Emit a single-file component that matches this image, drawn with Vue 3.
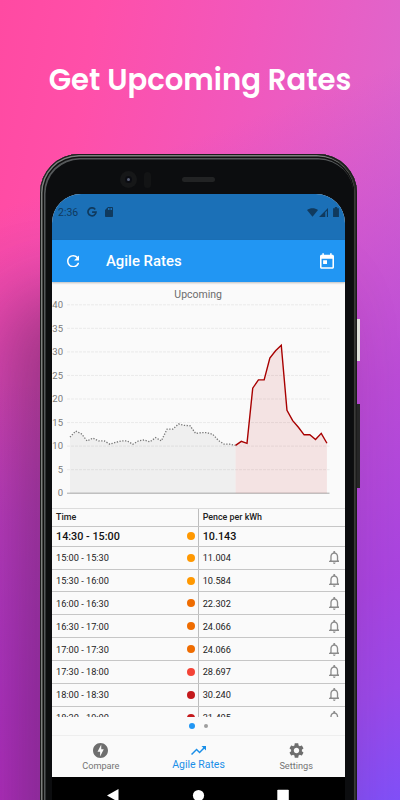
<template>
  <div class="promo">
    <h1 class="promo-title">Get Upcoming Rates</h1>
    <div class="phone">
      <div class="side-button power"></div>
      <div class="side-button volume"></div>
      <div class="bezel">
        <div class="camera"><i></i></div>
        <div class="sensor"></div>
        <div class="speaker"></div>
      </div>

      <div class="screen">
        <div class="status-bar">
          <span class="clock">2:36</span>
          <svg class="g-icon" viewBox="0 0 10 10">
            <path d="M8.2 2.4A4 4 0 1 0 9 5.1H5.1" fill="none" stroke="#103a5e" stroke-width="1.7" />
          </svg>
          <svg class="sd-icon" viewBox="4 2 16 20">
            <path fill="#103a5e" d="M18 2h-8L4.02 8 4 20c0 1.100.9 2 2 2h12c1.100 0 2-.9 2-2V4c0-1.100-.9-2-2-2zm-6 6h-2V4h2v4zm3 0h-2V4h2v4zm3 0h-2V4h2v4z" />
          </svg>
          <span class="spacer"></span>
          <svg class="wifi-icon" viewBox="0 0 24 19">
            <path fill="#103a5e" d="M12 19L0 4C7-1.300 17-1.300 24 4z" />
          </svg>
          <svg class="signal-icon" viewBox="0 0 20 20">
            <path fill="#103a5e" d="M0 20L20 0v20h-2.500V6L14 9.500V20z" />
          </svg>
          <svg class="battery-icon" viewBox="0 0 10 17">
            <path fill="#103a5e" d="M3 0h4v2h3v15H0V2h3z" />
          </svg>
        </div>

        <header class="app-bar">
          <svg class="refresh" viewBox="4 4 16 16">
            <path fill="#fff" d="M17.650 6.350C16.200 4.900 14.210 4 12 4c-4.420 0-7.990 3.580-7.990 8s3.570 8 7.990 8c3.730 0 6.840-2.550 7.730-6h-2.080c-.82 2.330-3.040 4-5.650 4-3.310 0-6-2.690-6-6s2.690-6 6-6c1.660 0 3.140.69 4.220 1.780L13 11h7V4l-2.350 2.350z" />
          </svg>
          <span class="app-title">Agile Rates</span>
          <svg class="today" viewBox="3 1 18 20">
            <path fill="#fff" d="M19 3h-1V1h-2v2H8V1H6v2H5c-1.110 0-1.990.9-1.990 2L3 19c0 1.100.89 2 2 2h14c1.100 0 2-.9 2-2V5c0-1.100-.9-2-2-2zm0 16H5V8h14v11zM7 10h5v5H7z" />
          </svg>
        </header>

        <svg class="chart" viewBox="52 282 293 226">
          <text class="chart-title" x="198.200" y="297.700" text-anchor="middle">Upcoming</text>
          <g v-for="tick in ticks" :key="tick">
            <line
              x1="67" x2="329.500" :y1="yFor(tick)" :y2="yFor(tick)"
              :class="tick === 0 ? 'axis' : 'grid'"
            />
            <text class="tick" x="63" :y="yFor(tick) + 3.200" text-anchor="end">{{ tick }}</text>
          </g>
          <polygon :points="area(past, 0)" fill="#000" fill-opacity="0.042" />
          <polygon :points="area(upcoming, past.length - 1)" fill="#c00000" fill-opacity="0.09" />
          <polyline :points="line(past, 0)" class="past-line" />
          <polyline :points="line(upcoming, past.length - 1)" class="upcoming-line" />
        </svg>

        <div class="table">
          <div class="row head">
            <div class="cell">Time</div>
            <div class="cell">Pence per kWh</div>
          </div>
          <div v-for="(rate, i) in rates" :key="rate.time" class="row" :class="{ now: i === 0 }">
            <div class="cell">
              <span>{{ rate.time }}</span>
              <span class="dot" :class="rate.level"></span>
            </div>
            <div class="cell">
              <span>{{ rate.price }}</span>
              <svg v-if="i > 0" class="bell" viewBox="4 2.500 16 19.500">
                <path fill="#8b8b8b" d="M12 22c1.100 0 2-.9 2-2h-4c0 1.100.9 2 2 2zm6-6v-5c0-3.070-1.630-5.640-4.500-6.320V4c0-.83-.67-1.500-1.500-1.500s-1.500.67-1.500 1.500v.68C7.640 5.360 6 7.920 6 11v5l-2 2v1h16v-1l-2-2zm-2 1H8v-6c0-2.480 1.510-4.500 4-4.500s4 2.020 4 4.500v6z" />
              </svg>
            </div>
          </div>
        </div>

        <div class="pager"><i class="on"></i><i></i></div>

        <nav class="tabs">
          <div class="tab">
            <svg class="bolt" viewBox="2 2 20 20">
              <path fill="#6e6e6e" d="M12 2.020c-5.510 0-9.980 4.470-9.980 9.980s4.470 9.980 9.980 9.980 9.980-4.470 9.980-9.980S17.510 2.020 12 2.020zM11.480 20v-6.260H8L13 4v6.260h3.350L11.480 20z" />
            </svg>
            <span>Compare</span>
          </div>
          <div class="tab active">
            <svg class="trend" viewBox="2 6 20 12">
              <path fill="#1a8fe8" d="M16 6l2.290 2.290-4.880 4.880-4-4L2 16.590 3.410 18l6-6 4 4 6.300-6.290L22 12V6z" />
            </svg>
            <span>Agile Rates</span>
          </div>
          <div class="tab">
            <svg class="gear" viewBox="2 2 20 20">
              <path fill="#6e6e6e" d="M19.140 12.940c.04-.3.060-.61.060-.94 0-.32-.02-.64-.07-.94l2.030-1.580c.18-.14.23-.41.120-.61l-1.920-3.320c-.12-.22-.37-.29-.59-.22l-2.390.96c-.5-.38-1.030-.7-1.620-.94l-.36-2.540c-.04-.24-.24-.41-.48-.41h-3.840c-.24 0-.43.17-.47.41l-.36 2.540c-.59.24-1.130.57-1.620.94l-2.390-.96c-.22-.08-.47 0-.59.22L2.740 8.870c-.12.21-.08.47.120.61l2.030 1.580c-.05.3-.09.63-.09.94s.02.64.070.94l-2.030 1.580c-.18.14-.23.41-.12.61l1.920 3.320c.12.22.37.29.59.22l2.390-.96c.5.38 1.030.7 1.620.94l.36 2.540c.05.24.24.41.48.41h3.840c.24 0 .44-.17.47-.41l.36-2.540c.59-.24 1.130-.56 1.620-.94l2.390.96c.22.08.47 0 .59-.22l1.920-3.320c.12-.22.070-.47-.12-.61l-2.010-1.580zM12 15.600c-1.980 0-3.600-1.620-3.600-3.600s1.620-3.600 3.600-3.600 3.600 1.620 3.600 3.600-1.620 3.600-3.600 3.600z" />
            </svg>
            <span>Settings</span>
          </div>
        </nav>

        <svg class="system-nav" viewBox="52 777 293 23">
          <path d="M118.500 788.500v13L107 795z" fill="#fff" />
          <circle cx="198.500" cy="795" r="5.600" fill="#fff" />
          <rect x="277.300" y="789.200" width="11.500" height="12" rx="0.800" fill="#fff" />
        </svg>
      </div>
    </div>
  </div>
</template>

<script setup>
const ticks = [0, 5, 10, 15, 20, 25, 30, 35, 40]

const past = [
  11.9, 13.2, 12.6, 11.1, 11.7, 11.1, 11.1, 10.4, 10.8, 11.1,
  11.1, 10.4, 11.1, 11.3, 10.9, 11.8, 11.1, 13.6, 13.6, 14.7,
  14.4, 14.35, 12.7, 12.85, 12.85, 12.5, 11.2, 10.4, 10.4, 10.143,
]

const upcoming = [
  10.143, 11.004, 10.584, 22.302, 24.066, 24.066, 28.697, 30.24, 31.405,
  17.6, 15.4, 14, 12.4, 12.4, 11.4, 12.7, 10.6,
]

const rates = [
  { time: '14:30 - 15:00', price: '10.143', level: 'low' },
  { time: '15:00 - 15:30', price: '11.004', level: 'low' },
  { time: '15:30 - 16:00', price: '10.584', level: 'low' },
  { time: '16:00 - 16:30', price: '22.302', level: 'mid' },
  { time: '16:30 - 17:00', price: '24.066', level: 'mid' },
  { time: '17:00 - 17:30', price: '24.066', level: 'mid' },
  { time: '17:30 - 18:00', price: '28.697', level: 'high' },
  { time: '18:00 - 18:30', price: '30.240', level: 'peak' },
  { time: '18:30 - 19:00', price: '31.405', level: 'peak' },
]

const xFor = (i) => 70 + i * 5.71
const yFor = (value) => 493.2 - value * 4.71

const line = (values, offset) =>
  values.map((v, i) => `${xFor(i + offset).toFixed(2)},${yFor(v).toFixed(2)}`).join(' ')

// closes the line down to the zero axis
const area = (values, offset) =>
  `${xFor(offset)},${yFor(0)} ${line(values, offset)} ${xFor(offset + values.length - 1)},${yFor(0)}`
</script>

<style>
body {
  margin: 0;
  overflow: hidden;
}
</style>

<style scoped>
.promo {
  position: relative;
  width: 400px;
  height: 800px;
  overflow: hidden;
  font-family: Roboto, sans-serif;
  background:
    radial-gradient(ellipse 200px 420px at 0 100%, rgba(190, 44, 200, 0.85), rgba(200, 50, 190, 0)),
    linear-gradient(160deg,
      rgba(180, 62, 214, 0) 22%,
      rgba(176, 66, 216, 0.75) 55%,
      rgba(166, 66, 224, 0.95) 76%,
      #9b49e9 88%,
      #8150f8 100%),
    linear-gradient(100deg, #ff4aa2 0%, #ff4fa9 18%, #f158bd 48%, #d16fd7 100%);
}

.promo-title {
  margin: 0;
  height: 154px;
  padding-top: 60px;
  box-sizing: border-box;
  text-align: center;
  color: #fff;
  font-family: Poppins, Inter, sans-serif;
  font-size: 29.100px;
  line-height: 40px;
  font-weight: 600;
  white-space: nowrap;
}

.phone {
  position: relative;
  box-sizing: border-box;
  width: 317px;
  height: 700px;
  margin-left: 40px;
  padding: 0 12px;
  border-radius: 39px;
  background: #0c0d0f;
  box-shadow:
    inset 0 0 0 1px #1c1c1c,
    inset -1.500px 0 0 1px #2e2e2c,
    inset 0 0 0 2.500px #7c7f7d,
    inset 0 0 0 4px #101010,
    inset 1px 1px 0 4.500px #55585a,
    -34px 140px 70px rgba(75, 25, 60, 0.44);
}

.side-button {
  position: absolute;
  left: 317px;
  width: 3px;
}

.power {
  top: 165px;
  height: 42px;
  background: #dfe0da;
}

.volume {
  top: 250px;
  height: 84px;
  background: #262626;
}

.bezel {
  display: flex;
  align-items: center;
  height: 39.500px;
  padding: 12px 0 0 68px;
  box-sizing: border-box;
}

.camera {
  display: flex;
  align-items: center;
  justify-content: center;
  width: 17px;
  height: 17px;
  border-radius: 50%;
  background: #161718;
}

.camera i {
  width: 3px;
  height: 3px;
  border-radius: 50%;
  background: #5b6278;
  border: 2px solid #0b0c12;
}

.sensor {
  width: 7px;
  height: 16px;
  margin-left: 7px;
  border-radius: 4px;
  background: #131415;
}

.speaker {
  width: 33px;
  height: 5px;
  margin-left: 31px;
  border-radius: 3px;
  background: #222324;
}

.screen {
  height: 640px;
  overflow: hidden;
  border-radius: 29px 29px 0 0;
  background: #fafafa;
}

.status-bar {
  display: flex;
  align-items: center;
  height: 46.500px;
  padding: 0 6px 9px;
  box-sizing: border-box;
  background: #1b70b7;
}

.clock {
  width: 29px;
  color: #103a5e;
  font-size: 10.500px;
}

.g-icon {
  width: 10px;
  height: 10px;
}

.sd-icon {
  width: 8px;
  height: 10px;
  margin-left: 8px;
}

.spacer {
  flex: 1;
}

.wifi-icon {
  width: 11px;
  height: 9px;
}

.signal-icon {
  width: 9px;
  height: 9px;
  margin-left: 1.500px;
}

.battery-icon {
  width: 6px;
  height: 10px;
  margin-left: 5px;
}

.app-bar {
  position: relative;
  display: flex;
  align-items: center;
  height: 42px;
  padding: 0 11px 0 14.500px;
  box-sizing: border-box;
  background: #2196f3;
  box-shadow: 0 1px 2px rgba(0, 0, 0, 0.25);
}

.refresh {
  width: 12.500px;
  height: 12.500px;
}

.app-title {
  flex: 1;
  margin-left: 27px;
  color: #fff;
  font-size: 14.900px;
  font-weight: 500;
}

.today {
  width: 14px;
  height: 16px;
}

.chart {
  display: block;
  width: 293px;
  height: 226px;
}

.chart-title {
  font-size: 10.500px;
  fill: #6c6c6c;
}

.tick {
  font-size: 9.500px;
  fill: #7b7b7b;
}

.grid {
  stroke: #e6e6e6;
  stroke-width: 0.8;
  stroke-dasharray: 3 1;
}

.axis {
  stroke: #a8a8a8;
  stroke-width: 1;
}

.past-line {
  fill: none;
  stroke: #777;
  stroke-width: 1.300;
  stroke-dasharray: 1.300 1.500;
}

.upcoming-line {
  fill: none;
  stroke: #a80000;
  stroke-width: 1.400;
}

.table {
  height: 209px;
  overflow: hidden;
}

.row {
  display: flex;
  height: 22.850px;
  box-sizing: border-box;
  border-bottom: 1px solid #c6c6c6;
  color: #222;
  font-size: 9.200px;
}

.row.head {
  height: 18.500px;
  border-top: 1px solid #dcdcdc;
  font-size: 8.900px;
  font-weight: 500;
}

.row.now {
  height: 20.300px;
  color: #111;
  font-size: 10.800px;
  font-weight: 500;
}

.cell {
  display: flex;
  align-items: center;
  justify-content: space-between;
  width: 146px;
  padding: 0 3.500px 0 4px;
  box-sizing: border-box;
}

.cell + .cell {
  flex: 1;
  padding-right: 6px;
  padding-left: 3.700px;
  border-left: 1px solid #bdbdbd;
}

.dot {
  flex: none;
  width: 8px;
  height: 8px;
  border-radius: 50%;
}

.low {
  background: #ff9800;
}

.mid {
  background: #ef6c00;
}

.high {
  background: #f44336;
}

.peak {
  background: #c4191c;
}

.bell {
  width: 10.500px;
  height: 13px;
}

.pager {
  display: flex;
  align-items: center;
  justify-content: center;
  gap: 9px;
  height: 17.500px;
  box-sizing: border-box;
}

.pager i {
  width: 4px;
  height: 4px;
  border-radius: 50%;
  background: #9e9e9e;
}

.pager .on {
  width: 6px;
  height: 6px;
  background: #2196f3;
}

.tabs {
  display: flex;
  height: 42.500px;
  box-sizing: border-box;
  border-top: 1px solid #eee;
}

.tab {
  flex: 1;
  display: flex;
  flex-direction: column;
  align-items: center;
  padding-top: 7px;
  color: #757575;
  font-size: 9.200px;
  line-height: 12px;
}

.tab span {
  margin-top: 2px;
}

.tab.active {
  color: #1a8fe8;
  font-size: 10.500px;
}

.bolt {
  width: 15px;
  height: 15px;
}

.gear {
  width: 15px;
  height: 15px;
}

.trend {
  width: 15px;
  height: 9px;
  margin: 3px 0 2.500px;
}

.system-nav {
  display: block;
  width: 293px;
  height: 24px;
  background: #000;
}
</style>
